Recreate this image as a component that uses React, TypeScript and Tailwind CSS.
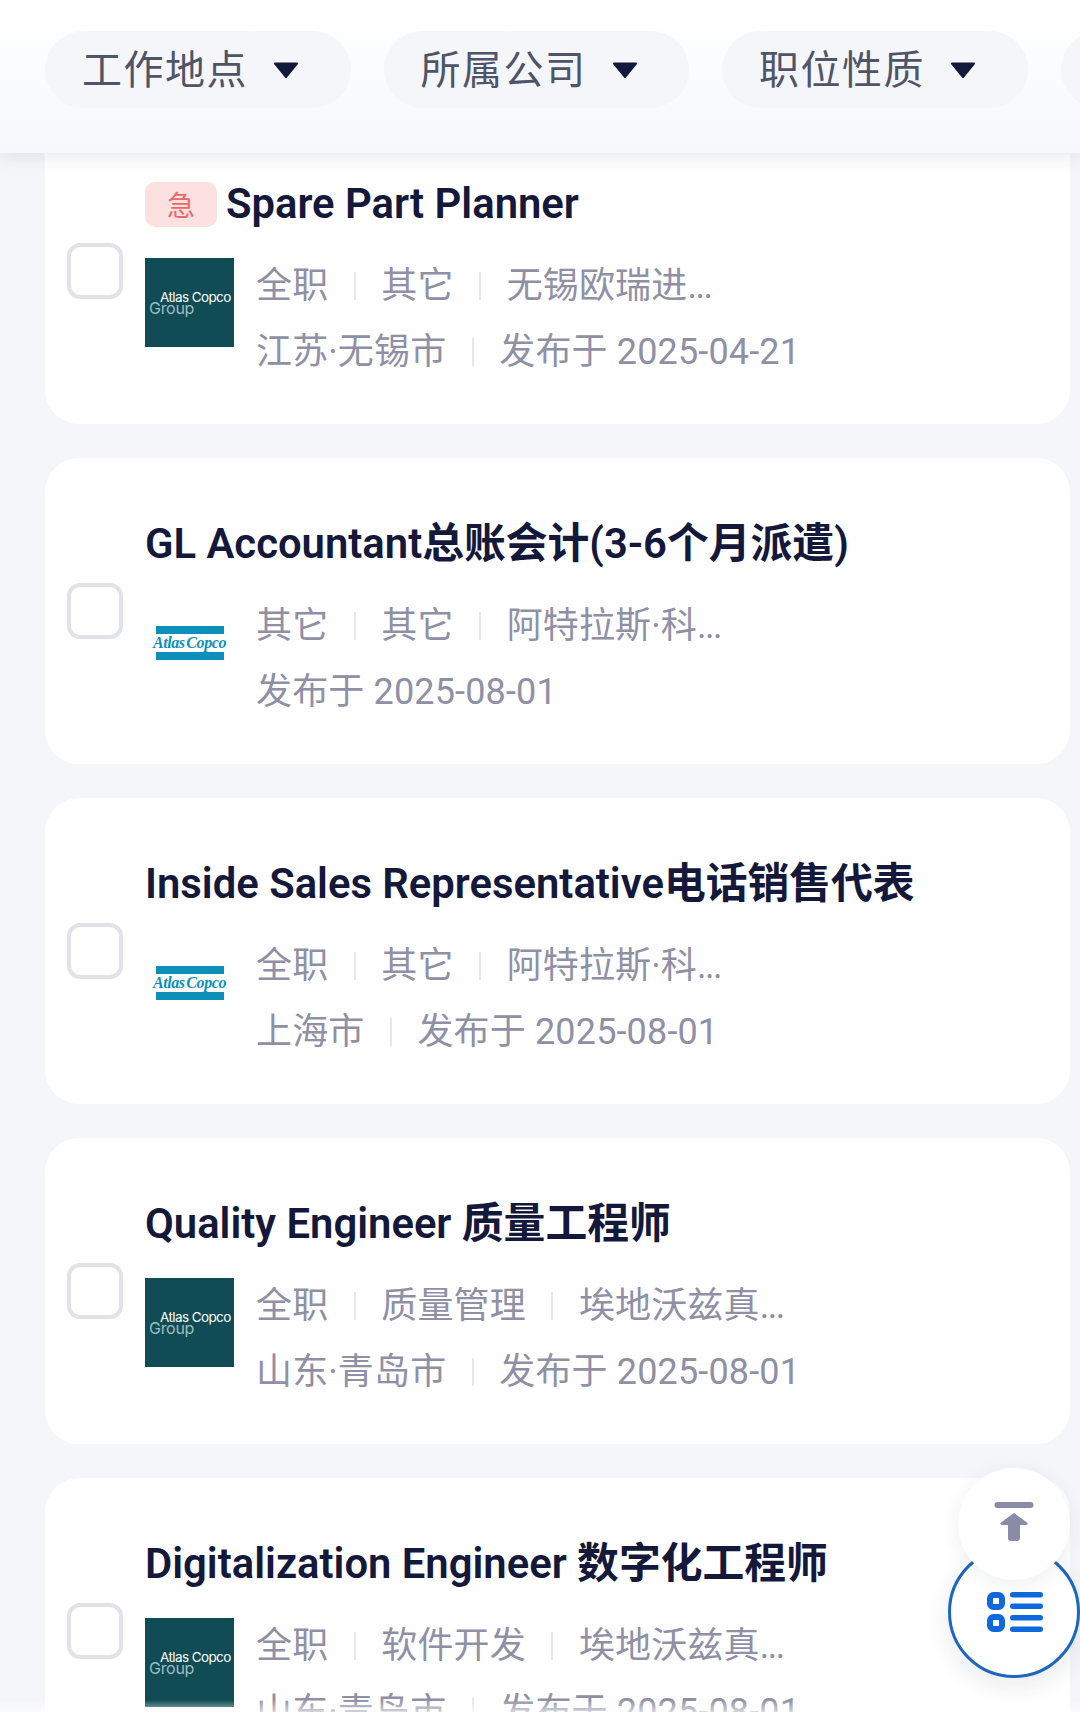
const fontStack = "font-['Roboto','Noto_Sans_CJK_SC',sans-serif]";

type Job = {
  title: string;
  urgent?: boolean;
  logo: 'green' | 'blue';
  meta: string[];
  sub: string[];
};

const jobs: Job[] = [
  { title: 'Spare Part Planner', urgent: true, logo: 'green', meta: ['全职', '其它', '无锡欧瑞进...'], sub: ['江苏·无锡市', '发布于 2025-04-21'] },
  { title: 'GL Accountant总账会计(3-6个月派遣)', logo: 'blue', meta: ['其它', '其它', '阿特拉斯·科...'], sub: ['发布于 2025-08-01'] },
  { title: 'Inside Sales Representative电话销售代表', logo: 'blue', meta: ['全职', '其它', '阿特拉斯·科...'], sub: ['上海市', '发布于 2025-08-01'] },
  { title: 'Quality Engineer 质量工程师', logo: 'green', meta: ['全职', '质量管理', '埃地沃兹真...'], sub: ['山东·青岛市', '发布于 2025-08-01'] },
  { title: 'Digitalization Engineer 数字化工程师', logo: 'green', meta: ['全职', '软件开发', '埃地沃兹真...'], sub: ['山东·青岛市', '发布于 2025-08-01'] },
];

function FilterPill({ label }: { label: string }) {
  return (
    <div className="flex h-[77px] w-[305.5px] shrink-0 items-center rounded-full bg-[#f4f6fa] pl-[37px]">
      <span className="pt-[2px] text-[40px] leading-none tracking-[1.5px] text-[#4f5468]">{label}</span>
      <svg width="26" height="16" viewBox="0 0 26 16" className="ml-[25px]">
        <path d="M2 1.5h22L13 15z" fill="#14183a" stroke="#14183a" strokeWidth="2" strokeLinejoin="round" />
      </svg>
    </div>
  );
}

function GreenLogo() {
  return (
    <div className="flex h-[89px] w-[89px] shrink-0 flex-col justify-center bg-[#0f4c56] font-['Inter',sans-serif]">
      <span className="ml-[15px] text-[13.5px] leading-[12px] tracking-[-0.6px] whitespace-nowrap text-white">Atlas Copco</span>
      <span className="ml-[4px] text-[16px] leading-[11px] tracking-[-0.3px] text-[#9dbcbf]">Group</span>
    </div>
  );
}

function BlueLogo() {
  return (
    <div className="flex h-[89px] w-[89px] shrink-0 flex-col items-center justify-center">
      <div className="h-[8px] w-[68px] bg-[#0e8fb8]" />
      <span className="my-[2px] font-['Liberation_Serif',serif] text-[16px] leading-[14px] font-bold tracking-[-0.4px] [word-spacing:-2px] whitespace-nowrap text-[#0e8fb8] italic">
        Atlas Copco
      </span>
      <div className="h-[8px] w-[68px] bg-[#0e8fb8]" />
    </div>
  );
}

function MetaRow({ items }: { items: string[] }) {
  return (
    <div className="flex h-[66px] items-center text-[36px] leading-none tracking-[0.15px] text-[#8f90a6]">
      {items.map((item, i) => (
        <div key={i} className="flex items-center">
          {i > 0 && <div className="mx-[25.5px] h-[28px] w-[2px] bg-[#e6e7ed]" />}
          {item.endsWith('...') ? (
            <span className="whitespace-nowrap">
              {item.slice(0, -3)}
              <span className="tracking-[-1.5px]">...</span>
            </span>
          ) : (
            <span className="whitespace-nowrap">{item}</span>
          )}
        </div>
      ))}
    </div>
  );
}

function JobCard({ job, first }: { job: Job; first?: boolean }) {
  return (
    <div className={`flex h-[306px] shrink-0 items-center rounded-[34px] bg-white pl-[22px] ${first ? '-mt-[35px]' : ''}`}>
      <div className="h-[56px] w-[56px] shrink-0 rounded-[13px] border-[4px] border-[#e1e3e8] bg-white" />
      <div className="ml-[22px] flex min-w-0 flex-col self-start pt-[58px]">
        <div className="flex h-[56px] items-center">
          {job.urgent && (
            <div className="mr-[9px] flex h-[45px] w-[72px] items-center justify-center rounded-[10px] bg-[#fde0e0] pt-[5px] text-[28px] leading-none text-[#e8696b]">
              急
            </div>
          )}
          <span className="text-[41.8px] leading-none font-semibold whitespace-nowrap text-[#14183a]">{job.title}</span>
        </div>
        <div className="mt-[26px] flex items-start">
          {job.logo === 'green' ? <GreenLogo /> : <BlueLogo />}
          <div className="ml-[22px] -mt-[5px] flex flex-col">
            <MetaRow items={job.meta} />
            <MetaRow items={job.sub} />
          </div>
        </div>
      </div>
    </div>
  );
}

export default function App() {
  return (
    <div className={`relative flex h-[1729px] w-[1080px] flex-col overflow-hidden bg-[#f5f6f9] ${fontStack}`}>
      <header className="relative z-10 flex h-[153px] shrink-0 gap-[33px] overflow-hidden bg-gradient-to-b from-white to-[#f6f8fc] pt-[31px] pl-[45px] shadow-[0_4px_18px_rgba(40,50,80,0.1)]">
        <FilterPill label="工作地点" />
        <FilterPill label="所属公司" />
        <FilterPill label="职位性质" />
        <FilterPill label="" />
      </header>

      <main className="flex h-[1559px] flex-col gap-[34px] overflow-hidden pr-[10px] pl-[45px]">
        {jobs.map((job, i) => (
          <JobCard key={job.title} job={job} first={i === 0} />
        ))}
      </main>

      <div className="h-[17px] shrink-0 bg-white" />
      <div className="absolute bottom-[17px] left-0 h-[12px] w-full bg-gradient-to-b from-white/0 to-white/60" />

      {/* floating buttons */}
      <div className="absolute top-[1546px] left-[948px] flex h-[132px] w-[132px] items-center justify-center rounded-full border-[3px] border-[#1a66c0] bg-white shadow-[0_8px_24px_rgba(40,50,80,0.1)]">
        <svg width="56" height="40" viewBox="0 0 56 40" className="ml-[1px]">
          <rect x="3" y="3" width="12" height="12" rx="3.500" fill="none" stroke="#0f68dc" strokeWidth="6" />
          <rect x="3" y="25" width="12" height="12" rx="3.500" fill="none" stroke="#0f68dc" strokeWidth="6" />
          <rect x="23" y="0" width="33" height="5.500" rx="2.750" fill="#0f68dc" />
          <rect x="23" y="11.500" width="33" height="5.500" rx="2.750" fill="#0f68dc" />
          <rect x="23" y="23" width="33" height="5.500" rx="2.750" fill="#0f68dc" />
          <rect x="23" y="34.500" width="33" height="5.500" rx="2.750" fill="#0f68dc" />
        </svg>
      </div>
      <div className="absolute top-[1468px] left-[958px] flex h-[112px] w-[112px] items-center justify-center rounded-full bg-white shadow-[0_4px_20px_rgba(40,50,80,0.08)]">
        <svg width="40" height="40" viewBox="0 0 40 40" className="-mt-[4px]">
          <rect x="0.500" y="0" width="39" height="6" rx="3" fill="#8a8ba6" />
          <path d="M20 11l13 9.500c1 .8.500 2.500-1 2.500h-6v13c0 1.700-1.300 3-3 3h-6c-1.700 0-3-1.300-3-3V23H8c-1.500 0-2-1.700-1-2.500z" fill="#8a8ba6" />
        </svg>
      </div>
    </div>
  );
}
